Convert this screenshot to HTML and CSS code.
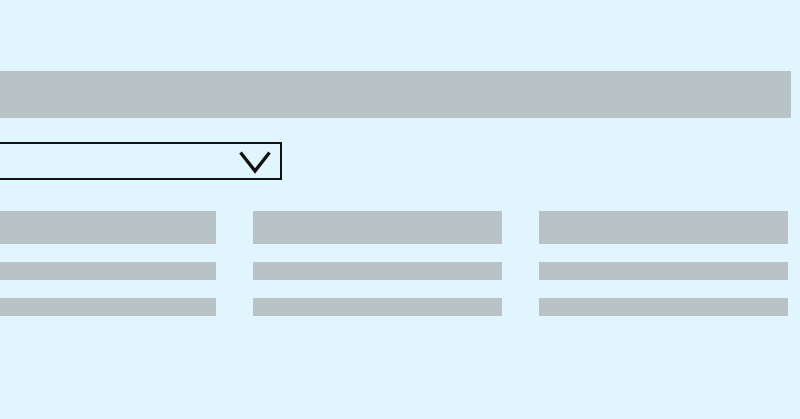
FILE: index.html
```html
<!DOCTYPE html>
<html>
<head>
    <title>Cargando</title>
    <meta charset="UTF-8">
    <meta name="viewport" content="width=device-width, initial-scale=1.0">
    <link rel="stylesheet" href="styles.css">
</head>
<body>
    <div class="page">
        <div class="bar title"></div>

        <div class="select">
            <svg class="chevron" width="32" height="23" viewBox="0 0 32 23">
                <polyline points="1.5,1.5 16,20 30.5,1.5" fill="none" stroke="#111" stroke-width="3.3"/>
            </svg>
        </div>

        <div class="cards">
            <div class="card">
                <div class="bar head"></div>
                <div class="bar line"></div>
                <div class="bar line"></div>
            </div>
            <div class="card">
                <div class="bar head"></div>
                <div class="bar line"></div>
                <div class="bar line"></div>
            </div>
            <div class="card">
                <div class="bar head"></div>
                <div class="bar line"></div>
                <div class="bar line"></div>
            </div>
        </div>
    </div>
</body>
</html>
```

FILE: styles.css
```css
html, body {
    margin: 0;
    height: 100%;
}
body {
    background: #e0f5fe;
    overflow: hidden;
}
.page {
    margin-left: -33px;
    padding-top: 71px;
    width: 824px;
}
.bar {
    background: #b9c2c5;
}
.title {
    height: 47px;
}
.select {
    box-sizing: border-box;
    margin-top: 24px;
    width: 315px;
    height: 38px;
    border: 2px solid #111;
    display: flex;
    align-items: center;
    justify-content: flex-end;
    padding-right: 9px;
}
.chevron {
    display: block;
    margin-top: 3px;
}
.cards {
    margin-top: 31px;
    width: 821px;
    display: grid;
    grid-template-columns: repeat(3, 1fr);
    gap: 37px;
}
.card {
    display: flex;
    flex-direction: column;
    gap: 18px;
}
.head {
    height: 33px;
}
.line {
    height: 18px;
}
```
